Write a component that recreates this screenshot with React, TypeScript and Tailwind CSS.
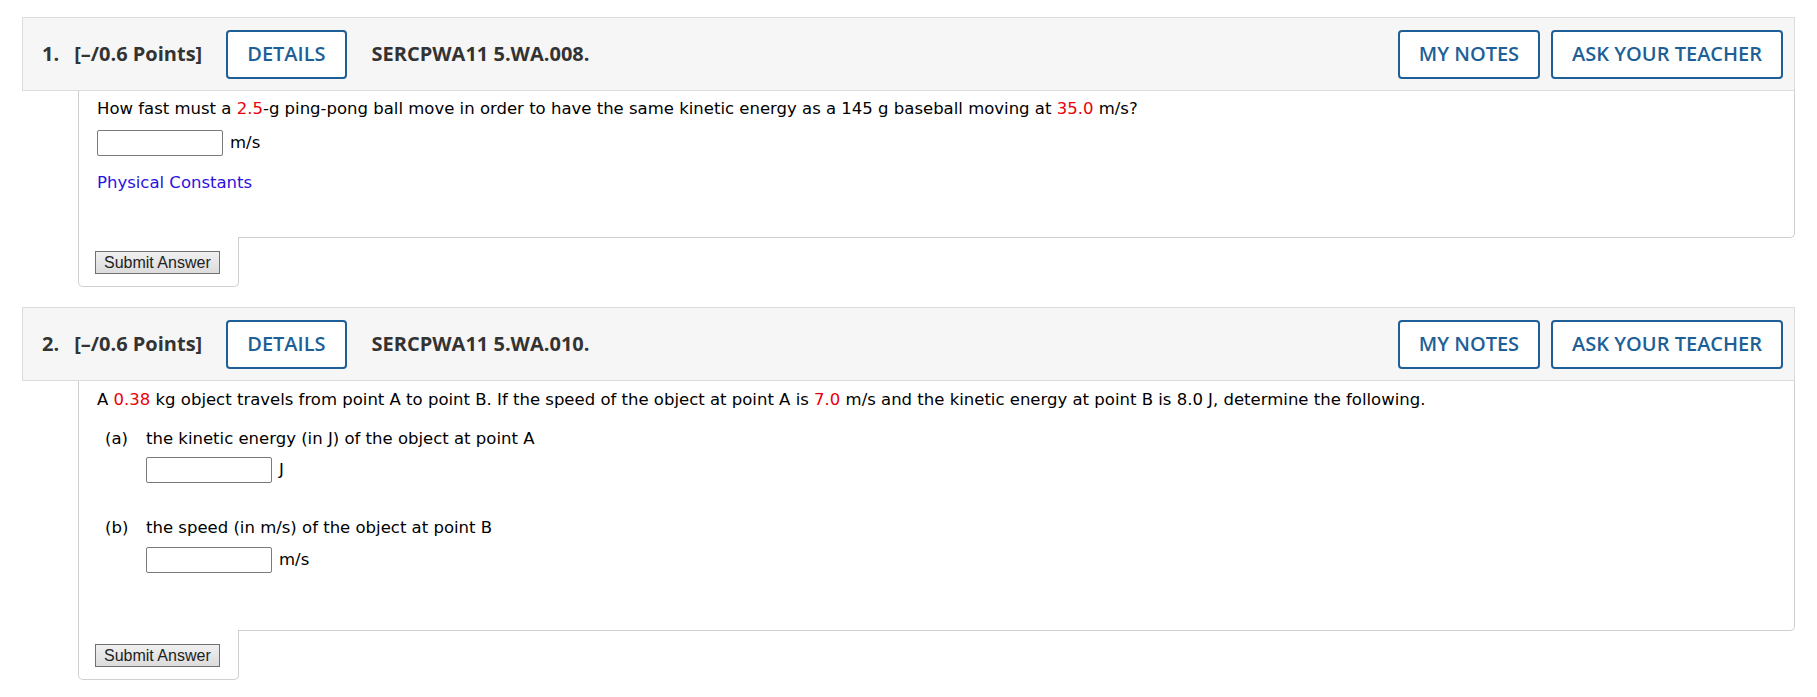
import type { ReactNode } from "react";

const body = "font-['DejaVu_Sans',Verdana,sans-serif] text-[16.5px] leading-[20px] text-black";

const Red = ({ children }: { children: ReactNode }) => (
  <span className="text-[#e8000b]">{children}</span>
);

const Answer = ({ unit }: { unit: string }) => (
  <div className="flex items-center gap-[7px]">
    <input
      type="text"
      className="h-[26px] w-[126px] rounded-[2px] border border-[#7a7a7a] bg-white outline-none"
    />
    <span className={body}>{unit}</span>
  </div>
);

const OutlineBtn = ({ label }: { label: string }) => (
  <button className="h-[49px] rounded-[4px] border-2 border-[#1e5f97] bg-white px-[19px] text-[20px] font-semibold text-[#1e5f97]">
    {label}
  </button>
);

const Header = ({ num, code }: { num: number; code: string }) => (
  <div className="flex h-[74px] items-center border border-[#dcdcdc] bg-[#f6f6f6] pl-[19px] pr-[11px] font-['Open_Sans',sans-serif] text-[20px]">
    <span className="font-bold text-[#333]">{num}.</span>
    <span className="ml-[15px] font-bold text-[#333]">[–/0.6 Points]</span>
    <div className="ml-[24px]">
      <OutlineBtn label="DETAILS" />
    </div>
    <span className="ml-[25px] font-bold text-[#333]">{code}</span>
    <div className="ml-auto flex gap-[11px]">
      <OutlineBtn label="MY NOTES" />
      <OutlineBtn label="ASK YOUR TEACHER" />
    </div>
  </div>
);

const SubmitTab = () => (
  <div className="relative -mt-px flex w-[161px] rounded-b-[5px] border-x border-b border-[#cfcfcf] bg-white pb-[12px] pl-[16px] pt-[14px]">
    <button className="h-[23px] border border-[#707070] bg-gradient-to-b from-[#f0f0f0] to-[#dcdcdc] px-[8px] font-['Liberation_Sans',Arial,sans-serif] text-[16px] leading-[19px] text-[#222]">
      Submit Answer
    </button>
  </div>
);

const Question = ({
  num,
  code,
  children,
}: {
  num: number;
  code: string;
  children: ReactNode;
}) => (
  <div>
    <Header num={num} code={code} />
    <div className="ml-[56px]">
      <div className="rounded-br-[5px] border-x border-b border-[#cfcfcf] bg-white pl-[18px]">
        {children}
      </div>
      <SubmitTab />
    </div>
  </div>
);

export default function App() {
  return (
    <div className="min-h-screen bg-white px-[22px] pt-[17px]">
      <Question num={1} code="SERCPWA11 5.WA.008.">
        <div className="pb-[44px] pt-[8px]">
          <p className={body}>
            How fast must a <Red>2.5</Red>-g ping-pong ball move in order to have the same kinetic
            energy as a 145 g baseball moving at <Red>35.0</Red> m/s?
          </p>
          <div className="mt-[11px]">
            <Answer unit="m/s" />
          </div>
          <a className={`${body} mt-[17px] block !text-[#2a12e0]`} href="#">
            Physical Constants
          </a>
        </div>
      </Question>

      <div className="mt-[20px]">
        <Question num={2} code="SERCPWA11 5.WA.010.">
          <div className="pb-[57px] pt-[9px]">
            <p className={body}>
              A <Red>0.38</Red> kg object travels from point A to point B. If the speed of the
              object at point A is <Red>7.0</Red> m/s and the kinetic energy at point B is 8.0 J,
              determine the following.
            </p>
            <div className="ml-[8px] mt-[19px] flex">
              <span className={`${body} w-[41px]`}>(a)</span>
              <div>
                <p className={body}>the kinetic energy (in J) of the object at point A</p>
                <div className="mt-[8px]">
                  <Answer unit="J" />
                </div>
              </div>
            </div>
            <div className="ml-[8px] mt-[35px] flex">
              <span className={`${body} w-[41px]`}>(b)</span>
              <div>
                <p className={body}>the speed (in m/s) of the object at point B</p>
                <div className="mt-[9px]">
                  <Answer unit="m/s" />
                </div>
              </div>
            </div>
          </div>
        </Question>
      </div>
    </div>
  );
}
